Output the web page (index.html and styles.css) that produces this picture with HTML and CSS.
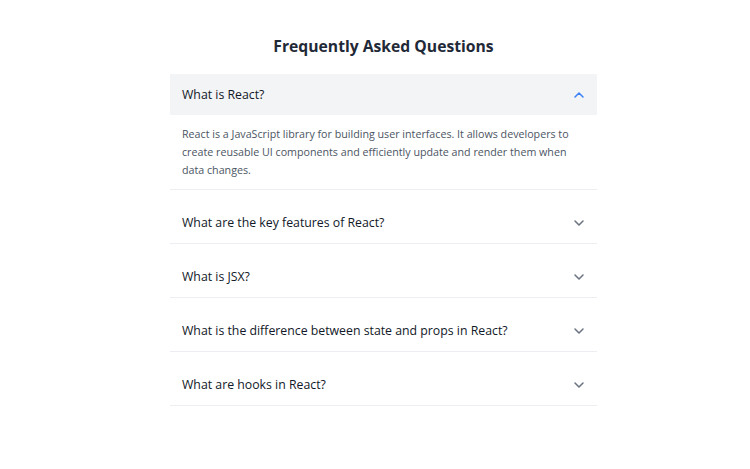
FILE: index.html
```html
<!DOCTYPE html>
<html lang="en">
<head>
    <meta charset="UTF-8">
    <meta name="viewport" content="width=device-width, initial-scale=1.0">
    <title>FAQ</title>
    <link rel="stylesheet" href="styles.css">
</head>
<body>
    <main class="faq">
        <h1>Frequently Asked Questions</h1>
        <div class="faq-list">
            <div class="faq-item open">
                <button type="button" class="faq-question">
                    <span>What is React?</span>
                    <svg class="chevron" viewBox="0 0 24 24"><path d="M6 15l6-6 6 6"/></svg>
                </button>
                <div class="faq-answer">
                    React is a JavaScript library for building user interfaces. It allows developers to create reusable UI components and efficiently update and render them when data changes.
                </div>
            </div>
            <div class="faq-item">
                <button type="button" class="faq-question">
                    <span>What are the key features of React?</span>
                    <svg class="chevron" viewBox="0 0 24 24"><path d="M6 9l6 6 6-6"/></svg>
                </button>
            </div>
            <div class="faq-item">
                <button type="button" class="faq-question">
                    <span>What is JSX?</span>
                    <svg class="chevron" viewBox="0 0 24 24"><path d="M6 9l6 6 6-6"/></svg>
                </button>
            </div>
            <div class="faq-item">
                <button type="button" class="faq-question">
                    <span>What is the difference between state and props in React?</span>
                    <svg class="chevron" viewBox="0 0 24 24"><path d="M6 9l6 6 6-6"/></svg>
                </button>
            </div>
            <div class="faq-item">
                <button type="button" class="faq-question">
                    <span>What are hooks in React?</span>
                    <svg class="chevron" viewBox="0 0 24 24"><path d="M6 9l6 6 6-6"/></svg>
                </button>
            </div>
        </div>
    </main>
</body>
</html>
```

FILE: styles.css
```css
body {
    margin: 0;
    background: #fff;
    font-family: "Open Sans", "Noto Sans", sans-serif;
    color: #111827;
}
.faq {
    width: 427px;
    margin: 0 0 0 170px;
    padding-top: 34px;
}
h1 {
    margin: 0 0 16px;
    text-align: center;
    font-size: 15.7px;
    font-weight: 700;
    color: #1f2937;
    line-height: 24px;
}
.faq-item {
    border-bottom: 1px solid #eceef1;
    margin-bottom: 12px;
}
.faq-question {
    display: flex;
    align-items: center;
    justify-content: space-between;
    width: 100%;
    height: 41px;
    padding: 0 10px 0 12px;
    border: none;
    background: #fff;
    font-family: inherit;
    font-size: 12.3px;
    font-weight: 500;
    color: #111827;
    text-align: left;
    cursor: pointer;
}
.faq-item.open .faq-question {
    background: #f3f4f6;
}
.chevron {
    width: 16px;
    height: 16px;
    fill: none;
    stroke: #6b7280;
    stroke-width: 2.3;
    stroke-linecap: round;
    stroke-linejoin: round;
}
.faq-item.open .chevron {
    stroke: #3b82f6;
}
.faq-answer {
    padding: 10px 12px;
    font-size: 10.7px;
    line-height: 18px;
    color: #4b5563;
}
```
